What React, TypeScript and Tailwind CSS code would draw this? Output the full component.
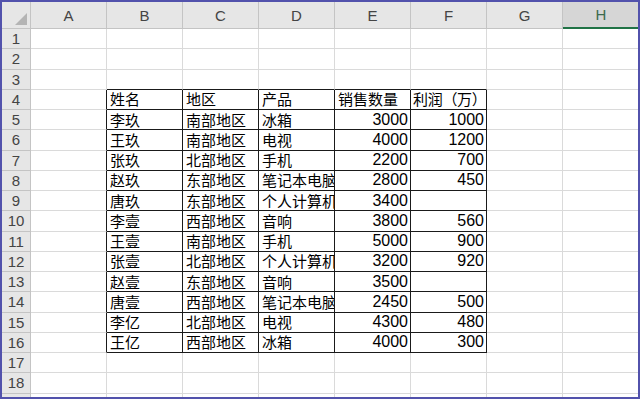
import React from "react";

const cols = ["A", "B", "C", "D", "E", "F", "G", "H"];

type Row = [string, string, string, string, string];

const table: Row[] = [
  ["姓名", "地区", "产品", "销售数量", "利润（万）"],
  ["李玖", "南部地区", "冰箱", "3000", "1000"],
  ["王玖", "南部地区", "电视", "4000", "1200"],
  ["张玖", "北部地区", "手机", "2200", "700"],
  ["赵玖", "东部地区", "笔记本电脑", "2800", "450"],
  ["唐玖", "东部地区", "个人计算机", "3400", ""],
  ["李壹", "西部地区", "音响", "3800", "560"],
  ["王壹", "南部地区", "手机", "5000", "900"],
  ["张壹", "北部地区", "个人计算机", "3200", "920"],
  ["赵壹", "东部地区", "音响", "3500", ""],
  ["唐壹", "西部地区", "笔记本电脑", "2450", "500"],
  ["李亿", "北部地区", "电视", "4300", "480"],
  ["王亿", "西部地区", "冰箱", "4000", "300"],
];

const FIRST = 4;
const LAST = 16;
const cjk = { fontFamily: '"Noto Sans CJK SC", "Noto Sans", sans-serif' };
const latin = { fontFamily: '"Liberation Sans", Arial, sans-serif' };

function Cell({ r, c }: { r: number; c: number }) {
  // c: 0 = A ... 7 = H
  const inTable = r >= FIRST && r <= LAST && c >= 1 && c <= 5;
  const aboveTable = r === FIRST - 1 && c >= 1 && c <= 5;
  const leftOfTable = r >= FIRST && r <= LAST && c === 0;

  const rightBlack = inTable || leftOfTable;
  const bottomBlack = inTable || aboveTable;

  let text = "";
  let numeric = false;
  if (inTable) {
    text = table[r - FIRST][c - 1];
    numeric = r > FIRST && c >= 4;
  }
  const tight = r === FIRST && c === 5;

  return (
    <div
      className={`flex items-center overflow-hidden whitespace-nowrap bg-white border-r border-b leading-[18px] ${
        rightBlack ? "border-r-[#1a1a1a]" : "border-r-[#dadada]"
      } ${bottomBlack ? "border-b-[#1a1a1a]" : "border-b-[#dadada]"} ${
        numeric
          ? "justify-end pr-[2px] text-[16px]"
          : tight
          ? "pl-[2px] text-[15px] tracking-[-0.3px]"
          : "pl-[3px] text-[15px]"
      } text-black`}
      style={numeric ? latin : cjk}
    >
      {text}
    </div>
  );
}

export default function App() {
  const rows = Array.from({ length: 19 }, (_, i) => i + 1);
  return (
    <div className="w-[640px] h-[399px] border-2 border-[#5252ac] overflow-hidden bg-white">
      <div className="grid grid-cols-[29px_repeat(8,76px)] grid-rows-[27px_repeat(19,20.25px)]">
        <div className="relative bg-[#e6e6e6] border-r border-b border-[#c4c4c4]">
          <div className="absolute right-[3px] bottom-[3px] w-0 h-0 border-l-[12px] border-l-transparent border-b-[12px] border-b-[#b4b4b4]" />
        </div>
        {cols.map((c) =>
          c === "H" ? (
            <div
              key={c}
              className="flex items-center justify-center bg-[#d6d6d6] border-b-2 border-b-[#217346] text-[15px] leading-none text-[#3b6b4e]"
              style={latin}
            >
              {c}
            </div>
          ) : (
            <div
              key={c}
              className="flex items-center justify-center bg-[#e6e6e6] border-r border-b border-[#c4c4c4] text-[15px] leading-none text-[#444]"
              style={latin}
            >
              {c}
            </div>
          )
        )}
        {rows.map((r) => (
          <React.Fragment key={r}>
            <div
              className="flex items-center justify-center bg-[#e6e6e6] border-r border-b border-[#c4c4c4] text-[15px] leading-none text-[#444]"
              style={latin}
            >
              {r}
            </div>
            {cols.map((_, c) => (
              <Cell key={c} r={r} c={c} />
            ))}
          </React.Fragment>
        ))}
      </div>
    </div>
  );
}
